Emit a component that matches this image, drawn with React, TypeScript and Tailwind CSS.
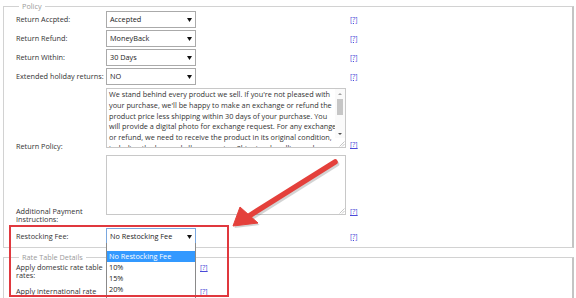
import React from "react";

function Help() {
  return (
    <span className="text-[7px] leading-[8px] text-[#4a4ad8] underline">[?]</span>
  );
}

function Select({ value, focused }: { value: string; focused?: boolean }) {
  return (
    <div
      className={
        focused
          ? "h-[17px] w-[90px] border border-[#7aa7de] bg-white flex items-center justify-between pl-[3px] pr-[3px] text-[#222]"
          : "h-[17px] w-[90px] border border-[#aaaaaa] bg-white flex items-center justify-between pl-[3px] pr-[3px] text-[#222]"
      }
    >
      <span>{value}</span>
      <svg width="5" height="4" viewBox="0 0 5 4">
        <path d="M0 0H5L2.5 4Z" fill="#111" />
      </svg>
    </div>
  );
}

function Grip() {
  return (
    <svg width="7" height="7" viewBox="0 0 7 7">
      <path d="M6.5 1.5L1.5 6.5M6.5 4L4 6.5" stroke="#b8b8b8" strokeWidth="0.8" />
    </svg>
  );
}

const policyLines = [
  "We stand behind every product we sell. If you're not pleased with",
  "your purchase, we'll be happy to make an exchange or refund the",
  "product price less shipping within 30 days of your purchase. You",
  "will provide a digital photo for exchange request. For any exchange",
  "or refund, we need to receive the product in its original condition,",
  "including the box and all accessories. Shipping, handling and",
];

export default function App() {
  return (
    <div
      className="relative w-[576px] h-[298px] overflow-hidden bg-white text-[7.3px] text-[#333]"
      style={{ fontFamily: '"Open Sans", "Noto Sans", sans-serif' }}
    >
      {/* Policy */}
      <div className="ml-[3px] mt-[6px] w-[571px] border border-[#d2d2d2] border-r-2 border-r-[#c4c4c4] pb-[2px]">
        <div className="-mt-[6px] ml-[15px] h-[10px] leading-[11px]">
          <span className="bg-white px-[3px] text-[#9a9a9a]">Policy</span>
        </div>
        <div className="flex flex-col pl-[12px]">
          <div className="grid grid-cols-[90px_244px_auto] items-center h-[17px]">
            <span>Return Accpted:</span>
            <Select value="Accepted" />
            <Help />
          </div>
          <div className="grid grid-cols-[90px_244px_auto] items-center h-[17px] mt-[2px]">
            <span>Return Refund:</span>
            <Select value="MoneyBack" />
            <Help />
          </div>
          <div className="grid grid-cols-[90px_244px_auto] items-center h-[17px] mt-[2px]">
            <span>Return Within:</span>
            <Select value="30 Days" />
            <Help />
          </div>
          <div className="grid grid-cols-[90px_244px_auto] items-center h-[17px] mt-[2px]">
            <span>Extended holiday returns:</span>
            <Select value="NO" />
            <Help />
          </div>
          <div className="grid grid-cols-[90px_244px_auto] items-end mt-[3px]">
            <span className="-mb-[4px]">Return Policy:</span>
            <div className="w-[240px] h-[60px] border border-[#c8c8c8] flex overflow-hidden">
              <div className="flex-1 pl-[2px] pt-[0px] leading-[10.8px] whitespace-nowrap text-[#333] overflow-hidden">
                {policyLines.map((l, i) => (
                  <div key={i}>{l}</div>
                ))}
              </div>
              <div className="w-[10px] flex flex-col items-center bg-[#fafafa]">
                <svg width="6" height="8" viewBox="0 0 6 8" className="mt-[1px]">
                  <path d="M1 5L3 3L5 5Z" fill="#a0a0a0" />
                </svg>
                <div className="w-[6px] h-[16px] bg-[#c6c6c6] mt-[1px]" />
                <div className="flex-1" />
                <svg width="6" height="8" viewBox="0 0 6 8">
                  <path d="M1 3L3 5L5 3Z" fill="#505050" />
                </svg>
                <div className="h-[9px] w-[10px] bg-white flex items-end justify-end">
                  <Grip />
                </div>
              </div>
            </div>
            <span className="-mb-[2px]">
              <Help />
            </span>
          </div>
          <div className="grid grid-cols-[90px_244px_auto] items-end mt-[7px]">
            <span className="leading-[7.5px] -mb-[8px]">
              Additional Payment
              <br />
              Instructions:
            </span>
            <div className="w-[240px] h-[60px] border border-[#c8c8c8] flex items-end justify-end">
              <Grip />
            </div>
            <span className="-mb-[2px]">
              <Help />
            </span>
          </div>
          <div className="grid grid-cols-[90px_244px_auto] items-center h-[17px] mt-[13px]">
            <span>Restocking Fee:</span>
            <Select value="No Restocking Fee" focused />
            <Help />
          </div>
        </div>
      </div>

      {/* Rate Table Details */}
      <div className="ml-[3px] mt-[9px] w-[571px] h-[60px] border border-[#d2d2d2] border-r-2 border-r-[#c4c4c4]">
        <div className="-mt-[6px] ml-[15px] h-[10px] leading-[11px]">
          <span className="bg-white px-[3px] text-[#9a9a9a]">Rate Table Details</span>
        </div>
        <div className="flex flex-col pl-[12px]">
          <div className="grid grid-cols-[90px_94px_auto] items-start mt-[2px]">
            <span className="leading-[7.5px]">
              Apply domestic rate table
              <br />
              rates:
            </span>
            <div />
            <Help />
          </div>
          <div className="grid grid-cols-[90px_94px_auto] items-center mt-[8px]">
            <span className="leading-[9px]">Apply international rate</span>
            <div />
            <Help />
          </div>
        </div>
      </div>

      {/* open dropdown list */}
      <div className="absolute left-[106px] top-[243px] w-[90px] h-[60px] border border-[#8a8a8a] border-t-0 bg-white text-[#222]">
        <div className="h-[8px]" />
        <div className="h-[11px] leading-[11px] bg-[#3399ff] text-white pl-[2px]">No Restocking Fee</div>
        <div className="h-[11px] leading-[11px] pl-[2px]">10%</div>
        <div className="h-[11px] leading-[11px] pl-[2px]">15%</div>
        <div className="h-[11px] leading-[11px] pl-[2px]">20%</div>
      </div>

      {/* annotation box */}
      <div className="absolute left-[9px] top-[225px] w-[220px] h-[72px] border-2 border-[#e0383e]" />

      {/* annotation arrow */}
      <svg className="absolute left-0 top-0 pointer-events-none" width="576" height="298" viewBox="0 0 576 298">
        <g opacity="0.25" transform="translate(1.5,2)">
          <line x1="335" y1="162" x2="249" y2="216" stroke="#555" strokeWidth="5.5" strokeLinecap="round" />
          <path d="M233 226L240 207L258 223Z" fill="#555" />
        </g>
        <line x1="335" y1="162" x2="249" y2="216" stroke="#e4403b" strokeWidth="5.5" strokeLinecap="round" />
        <path d="M233 226L240 207L258 223Z" fill="#e4403b" stroke="#e4403b" strokeWidth="1" strokeLinejoin="round" />
      </svg>
    </div>
  );
}
